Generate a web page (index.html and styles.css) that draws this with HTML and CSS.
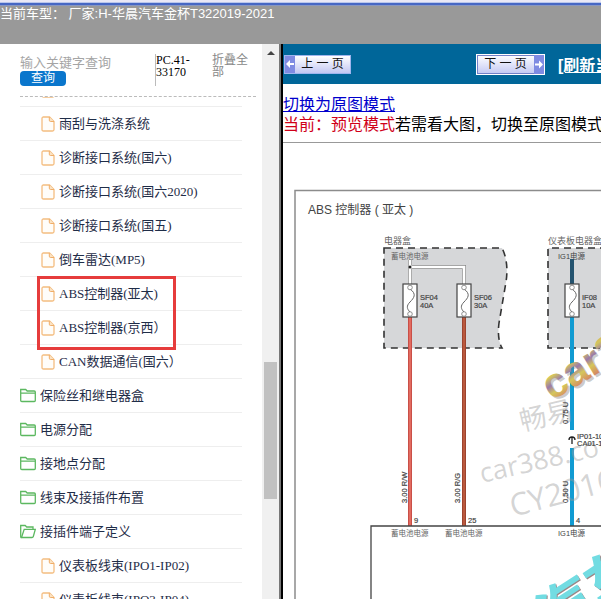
FILE: index.html
```html
<!DOCTYPE html>
<html lang="zh-CN">
<head>
<meta charset="utf-8">
<title>ABS控制器(亚太)</title>
<link rel="stylesheet" href="styles.css">
</head>
<body>
<svg class="sprite" aria-hidden="true">
  <symbol id="doc" viewBox="0 0 14 16"><path d="M2 1h6.500l4.500 4.500v8q0 1.500-1.500 1.500h-9q-1.500 0-1.500-1.500v-11q0-1.500 1.500-1.500z" fill="#fffdf9" stroke="#f4bd80" stroke-width="1.300"/><path d="M8.300 1v3.200q0 1.300 1.300 1.300h3.400" fill="#fbe3c4" stroke="#f0ad68"/></symbol>
  <symbol id="folder" viewBox="0 0 16 15"><path d="M.7 12.500v-11h5l1.500 1.500h7q1.100 0 1.100 1v8.500q0 1-1 1h-12.500q-1.100 0-1.100-1zM.7 5.200h14.600" fill="none" stroke="#5cb860" stroke-width="1.300"/></symbol>
  <symbol id="folder-open" viewBox="0 0 16 15"><path d="M1.500 13.500q-.8 0-.8-1v-11h4.500l1.500 1.500h6.300v2" fill="none" stroke="#5cb860" stroke-width="1.300"/><path d="M1.500 13.500l2.700-8.200h11.100l-2 7.200q-.3 1-1.300 1z" fill="none" stroke="#5cb860" stroke-width="1.300"/></symbol>
</svg>
<header class="banner">当前车型： 厂家:H-华晨汽车金杯T322019-2021</header>
<div class="workspace">
  <aside class="side">
    <div class="side-main">
      <form class="search">
        <div class="search-field">
          <input type="text" placeholder="输入关键字查询" aria-label="输入关键字查询">
          <button type="button">查询</button>
        </div>
        <span class="code">PC.41-33170</span>
        <a class="fold" href="#">折叠全部</a>
      </form>
      <nav class="tree">
        <ul>
          <li class="leaf"><svg><use href="#doc"/></svg></li>
          <li class="leaf"><svg><use href="#doc"/></svg><a href="#">雨刮与洗涤系统</a></li>
          <li class="leaf"><svg><use href="#doc"/></svg><a href="#">诊断接口系统(国六)</a></li>
          <li class="leaf"><svg><use href="#doc"/></svg><a href="#">诊断接口系统(国六2020)</a></li>
          <li class="leaf"><svg><use href="#doc"/></svg><a href="#">诊断接口系统(国五)</a></li>
          <li class="leaf"><svg><use href="#doc"/></svg><a href="#">倒车雷达(MP5)</a></li>
          <li class="leaf marked"><svg><use href="#doc"/></svg><a href="#">ABS控制器(亚太)</a></li>
          <li class="leaf"><svg><use href="#doc"/></svg><a href="#">ABS控制器(京西）</a></li>
          <li class="leaf"><svg><use href="#doc"/></svg><a href="#">CAN数据通信(国六）</a></li>
          <li><svg><use href="#folder"/></svg><a href="#">保险丝和继电器盒</a></li>
          <li><svg><use href="#folder"/></svg><a href="#">电源分配</a></li>
          <li><svg><use href="#folder"/></svg><a href="#">接地点分配</a></li>
          <li><svg><use href="#folder"/></svg><a href="#">线束及接插件布置</a></li>
          <li><svg><use href="#folder-open"/></svg><a href="#">接插件端子定义</a></li>
          <li class="leaf"><svg><use href="#doc"/></svg><a href="#">仪表板线束(IPO1-IP02)</a></li>
          <li class="leaf"><svg><use href="#doc"/></svg><a href="#">仪表板线束(IPO3-IP04)</a></li>
        </ul>
      </nav>
    </div>
    <div class="track" aria-hidden="true"><i class="up"></i><i class="before"></i><i class="thumb"></i><i class="after"></i></div>
  </aside>
  <main class="viewer">
    <div class="toolbar">
      <a class="pager" href="#"><span class="arrow"><svg viewBox="0 0 10 16"><path d="M1 8l4-4v3h4v2h-4v3z"/></svg></span><span class="label">上 一 页</span></a>
      <a class="pager next" href="#"><span class="label">下 一 页</span><span class="arrow"><svg viewBox="0 0 10 16"><path d="M9 8l-4-4v3h-4v2h4v3z"/></svg></span></a>
      <a class="refresh" href="#">[刷新当前页]</a>
    </div>
    <div class="mode">
      <a href="#">切换为原图模式</a>
      <p><span>当前：预览模式</span>若需看大图，切换至原图模式</p>
    </div>
    <svg class="diagram" viewBox="283 143 480 457" font-family="'Liberation Sans','Noto Sans CJK SC',sans-serif" fill="#444">
      <defs>
        <linearGradient id="rainbow" x1="0" y1="0" x2=".12" y2=".5" spreadMethod="reflect"><stop offset="0" stop-color="#8f6fa6"/><stop offset=".35" stop-color="#d58e62"/><stop offset=".7" stop-color="#d5c75b"/><stop offset="1" stop-color="#9a7aaa"/></linearGradient>
        <g id="fuse"><rect x="-7" y="0" width="14" height="33" fill="#fff" stroke="#444" stroke-width="1.200"/><path d="M0 5c7 5 4 9 0 13s-3 7 0 10" fill="none" stroke="#666" stroke-width="1"/><circle cy="3.500" r="2.300" fill="#fff" stroke="#777" stroke-width=".8"/><circle cy="30" r="2.300" fill="#fff" stroke="#777" stroke-width=".8"/></g>
      </defs>
      <path d="M295 600V190.500H763" fill="none" stroke="#8c8c8c" stroke-width="1.500"/>
      <text x="308" y="214" font-size="12">ABS 控制器 ( 亚太 )</text>
      <path d="M384 248H502Q509 262 506 282L499 323Q497 339 502 348H384z" fill="#d6d7d9" stroke="#333" stroke-width="1.600" stroke-dasharray="7 5"/>
      <path d="M763 248H548V348H763" fill="#d6d7d9" stroke="#333" stroke-width="1.600" stroke-dasharray="7 5"/>
      <g font-family="'Noto Sans CJK SC',sans-serif" fill="#666">
        <text x="384" y="244" font-size="9">电器盒</text>
        <text x="548" y="244" font-size="9">仪表板电器盒</text>
        <text x="391" y="259" font-size="7.500">蓄电池电源</text>
        <text x="391" y="536" font-size="7.500">蓄电池电源</text>
        <text x="445" y="536" font-size="7.500">蓄电池电源</text>
      </g>
      <g font-size="7.500"><text x="558" y="259">IG1电源</text><text x="558" y="536">IG1电源</text></g>
      <path d="M410 260V284M410 267H464V284" fill="none" stroke="#888" stroke-width="4"/>
      <path d="M410 260V284M410 267H464V284" fill="none" stroke="#fff" stroke-width="2.600"/>
      <circle cx="410" cy="267" r="1.500" fill="#222"/>
      <path d="M572 259V285" stroke="#24536f" stroke-width="4"/>
      <path d="M410 317V526" stroke="#c94f48" stroke-width="4"/><path d="M410 317V526" stroke="#ea7468" stroke-width="1.500"/>
      <path d="M464 317V526" stroke="#9d442f" stroke-width="4"/><path d="M464 317V526" stroke="#c46045" stroke-width="1.500"/>
      <path d="M572 317V430M572 448V526" stroke="#119bd2" stroke-width="4"/>
      <use href="#fuse" x="410" y="284"/><use href="#fuse" x="464" y="284"/><use href="#fuse" x="572" y="284"/>
      <g fill="#999" fill-opacity=".42" font-family="'Open Sans','Noto Sans CJK SC',sans-serif">
        <text transform="translate(522 431) rotate(-13)" font-size="27">畅易</text>
        <text transform="translate(482 483) rotate(-13)" font-size="27">car388.com</text>
        <text transform="translate(513 517) rotate(-15)" font-size="31">CY2016</text>
      </g>
      <g font-size="7.500" stroke="#444" stroke-width=".2">
        <text x="420" y="300">SF04</text><text x="420" y="308">40A</text>
        <text x="474" y="300">SF06</text><text x="474" y="308">30A</text>
        <text x="582" y="300">IF08</text><text x="582" y="308">10A</text>
        <text transform="translate(407 503) rotate(-90)">3.00 R/W</text>
        <text transform="translate(460 503) rotate(-90)">3.00 R/G</text>
        <text transform="translate(568 424) rotate(-90)">0.75 U</text>
        <text transform="translate(568 503) rotate(-90)">0.50 U</text>
        <text x="414" y="523">9</text><text x="468" y="523">25</text><text x="576" y="523">4</text>
        <text x="577" y="439">IP01-10</text><text x="577" y="446">CA01-10</text>
      </g>
      <path d="M572 444V437M569 440q0-3 3-3t3 3" fill="none" stroke="#222" stroke-width="1.300"/>
      <path d="M371 600V526H763" fill="none" stroke="#444" stroke-width="1.300"/>
      <g font-weight="bold" font-size="42">
        <text transform="translate(554 403) rotate(-31)" fill="#777" fill-opacity=".4">car388</text>
        <text transform="translate(552 401) rotate(-31)" fill="url(#rainbow)">car388</text>
      </g>
      <g font-weight="bold" font-size="56">
        <text transform="translate(555 640) rotate(-33)" fill="#9c8585">汽车</text>
        <text transform="translate(554 639) rotate(-33)" fill="#72dce2">汽车</text>
      </g>
    </svg>
  </main>
</div>
</body>
</html>
```
FILE: styles.css
```css
*, *::before, *::after { box-sizing: border-box; }
body {
  margin: 0;
  height: 100vh;
  display: flex;
  flex-direction: column;
  overflow: hidden;
  background: #fff;
  font-family: "Liberation Sans", "Noto Sans CJK SC", sans-serif;
}
a { color: inherit; text-decoration: none; }
.sprite { display: none; }
.banner {
  flex: none;
  height: 44px;
  padding-top: 4px;
  background: linear-gradient(#e9e8f6 0 2px, #b9c6ec 2px 3px, #4667c4 3px 5px, #8796c2 5px 6px, #999 6px);
  color: #fff;
  font-size: 13px;
  line-height: 20px;
  white-space: pre;
}
.workspace { flex: 1; min-height: 0; display: flex; }
.side {
  flex: none;
  width: 283px;
  display: flex;
  border-right: 2px solid #000;
  box-shadow: inset -2px 0 #777;
}
.side-main { flex: 1; min-width: 0; display: flex; flex-direction: column; }
.search {
  flex: none;
  display: flex;
  align-items: flex-start;
  height: 53px;
  margin: 0 6px 0 20px;
  padding-top: 10px;
  border-bottom: 1px dashed #bbb;
}
.search-field { width: 135px; display: flex; flex-direction: column; align-items: flex-start; }
.search input {
  width: 130px;
  height: 17px;
  padding: 0;
  border: 0;
  outline: 0;
  background: none;
  font: 13px/17px "Liberation Sans", "Noto Sans CJK SC", sans-serif;
}
.search input::placeholder { color: #a5a5a5; }
.search button {
  width: 46px;
  height: 15px;
  padding: 0;
  border: 0;
  border-radius: 4px;
  background: #0a76cc;
  color: #fff;
  font: 12px/15px "Liberation Sans", "Noto Sans CJK SC", sans-serif;
}
.code {
  width: 57px;
  height: 32px;
  padding-right: 16px;
  border-left: 1px solid #bbb;
  font: 12px/12px "Liberation Serif", serif;
}
.fold { width: 40px; color: #888; font-size: 12px; line-height: 12px; }
.tree { flex: 1; min-height: 0; overflow: hidden; }
.tree ul { margin: -24px 20px 0; padding: 0; list-style: none; }
.tree li {
  position: relative;
  display: flex;
  align-items: center;
  gap: 4px;
  height: 34px;
  border-bottom: 1px solid #eee;
  color: #1f2d48;
  font: 13px/20px "Liberation Serif", "Noto Sans CJK SC", serif;
  white-space: nowrap;
}
.tree svg { flex: none; width: 16px; height: 15px; }
.tree .leaf { padding-left: 21px; }
.tree .leaf svg { width: 14px; height: 16px; }
.tree .marked::after {
  content: "";
  position: absolute;
  z-index: 1;
  left: 17px;
  top: -1px;
  width: 139px;
  height: 74px;
  border: 3px solid #e63c3c;
}
.track {
  width: 17px;
  margin-right: 2px;
  display: flex;
  flex-direction: column;
  align-items: center;
  background: #f0f0f0;
}
.up { margin: 7px 0; border: 4px solid transparent; border-top: 0; border-bottom: 4px solid #444; }
.before { flex: 300; }
.thumb { flex: 137; width: 13px; background: #c1c1c1; }
.after { flex: 100; }
.viewer { flex: 1; min-width: 0; overflow: hidden; }
.toolbar {
  display: flex;
  align-items: center;
  height: 40px;
  padding-left: 1px;
  background: #069;
  white-space: nowrap;
}
.pager {
  flex: none;
  display: flex;
  width: 67px;
  height: 19px;
  border: 1px solid #9fb5ee;
  background: linear-gradient(#fff, #c3c8f3);
  color: #111;
  font-size: 12px;
  line-height: 17px;
}
.pager .arrow { width: 10px; background: #7f8be2; display: flex; }
.pager svg { width: 10px; height: 16px; fill: #fff; }
.pager .label { flex: 1; text-align: center; }
.next {
  width: 69px;
  height: 21px;
  margin-left: 125px;
  border: 1px solid #fff;
  box-shadow: inset 0 0 0 1px #7381c8;
  line-height: 19px;
}
.next svg { height: 19px; }
.refresh { margin-left: 13px; color: #fff; font-size: 16px; font-weight: bold; text-decoration: underline; }
.mode {
  height: 59px;
  padding-top: 11px;
  border-bottom: 1px solid #999;
  font-size: 16px;
  line-height: 20px;
  white-space: nowrap;
}
.mode a { display: block; color: #00c; text-decoration: underline; }
.mode p { margin: 0; }
.mode span { color: #d00018; }
.diagram { display: block; width: 480px; height: 457px; }
```
